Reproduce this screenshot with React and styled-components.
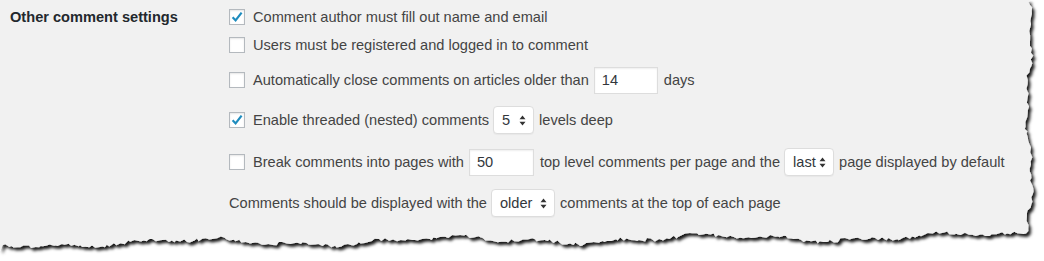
import React from "react"
import styled, { createGlobalStyle } from "styled-components"

const GlobalStyle = createGlobalStyle`
  html, body {
    margin: 0;
    padding: 0;
    background: #fff;
  }
  body {
    font-family: "Liberation Sans", Arial, sans-serif;
  }
`;

// deterministic jitter for the torn paper edge
function makeRand(seed) {
  let s = seed
  return () => {
    s = (s * 16807) % 2147483647
    return (s - 1) / 2147483646
  }
}

function tornPath() {
  const rand = makeRand(11)
  const pts = [[0, 0], [1030, 0]]
  for (let y = 2; y < 232; y += 2 + rand() * 3) {
    const x = 1029 + 2.5 * Math.sin(y / 23) + 1.6 * Math.sin(y / 7.3) + (rand() - 0.5) * 2.6
    pts.push([x, y])
  }
  for (let x = 1026; x > 0; x -= 1.5 + rand() * 3.5) {
    const y = 244 - (x / 1026) * 8 + 3 * Math.sin(x / 41) + 1.8 * Math.sin(x / 12.7) + (rand() - 0.5) * 3.6
    pts.push([x, y])
  }
  pts.push([0, 251])
  return "M" + pts.map(p => p[0].toFixed(1) + " " + p[1].toFixed(1)).join(" L") + " Z"
}

const PAPER = tornPath()

const Page = styled.div`
  position: relative;
  width: 1044px;
  height: 261px;
  overflow: hidden;
  background: #fff;
`;

const Paper = styled.svg`
  position: absolute;
  left: 0;
  top: 0;
  z-index: 0;
`;

const Table = styled.div`
  position: relative;
  z-index: 1;
  display: flex;
  padding-top: 3px;
  color: #444;
  font-size: 14.6px;
`;

const Heading = styled.div`
  width: 229px;
  padding-left: 10px;
  box-sizing: border-box;
  height: 28px;
  line-height: 28px;
  font-weight: 700;
  color: #23282d;
`;

const Fields = styled.div`
  display: flex;
  flex-direction: column;
`;

const Row = styled.div`
  display: flex;
  align-items: center;
  height: 28px;
  margin-top: ${p => p.$top || 0}px;
  white-space: pre;
`;

const Box = styled.span`
  width: 16px;
  height: 16px;
  box-sizing: border-box;
  border: 1px solid #b4b9be;
  background: #fff;
  box-shadow: inset 0 1px 2px rgba(0, 0, 0, 0.1);
  margin-right: 8px;
  display: flex;
  align-items: center;
  justify-content: center;
`;

const TextInput = styled.span`
  width: ${p => p.$w}px;
  height: 27px;
  box-sizing: border-box;
  border: 1px solid #ddd;
  background: #fff;
  box-shadow: inset 0 1px 2px rgba(0, 0, 0, 0.07);
  padding-left: 7px;
  margin: 0 6px 0 5px;
  display: flex;
  align-items: center;
  color: #32373c;
`;

const Select = styled.span`
  width: ${p => p.$w}px;
  height: 28px;
  box-sizing: border-box;
  border: 1px solid #ddd;
  border-radius: 4px;
  background: #fff;
  box-shadow: 0 1px 1px rgba(0, 0, 0, 0.04);
  padding: 0 7px 0 8px;
  margin: 0 5px 0 4px;
  display: flex;
  align-items: center;
  justify-content: space-between;
  color: #32373c;
`;

function Checkbox({ checked }) {
  return (
    <Box>
      {checked && (
        <svg width="14" height="14" viewBox="0 0 14 14">
          <path d="M2.6 7.2 L5.6 10.4 L11.6 2.6" fill="none" stroke="#1e8cbe" strokeWidth="2.2" strokeLinejoin="miter" />
        </svg>
      )}
    </Box>
  )
}

function Dropdown({ value, width }) {
  return (
    <Select $w={width}>
      <span>{value}</span>
      <svg width="7" height="11" viewBox="0 0 7 11">
        <path d="M3.5 0.5 L6.5 4.2 L0.5 4.2 Z M3.5 10.5 L6.5 6.8 L0.5 6.8 Z" fill="#333" />
      </svg>
    </Select>
  )
}

function App() {
  return (
    <Page>
      <GlobalStyle />
      <Paper width="1044" height="261" viewBox="0 0 1044 261">
        <defs>
          <filter id="tear" x="-5%" y="-5%" width="110%" height="120%">
            <feDropShadow dx="2.5" dy="3" stdDeviation="1.6" floodColor="#000" floodOpacity="0.9" />
          </filter>
        </defs>
        <path d={PAPER} fill="#f1f1f1" filter="url(#tear)" />
      </Paper>
      <Table>
        <Heading>Other comment settings</Heading>
        <Fields>
          <Row>
            <Checkbox checked />
            Comment author must fill out name and email
          </Row>
          <Row>
            <Checkbox />
            Users must be registered and logged in to comment
          </Row>
          <Row $top={7}>
            <Checkbox />
            Automatically close comments on articles older than
            <TextInput $w={64}>14</TextInput>
            days
          </Row>
          <Row $top={12}>
            <Checkbox checked />
            Enable threaded (nested) comments
            <Dropdown value="5" width={41} />
            levels deep
          </Row>
          <Row $top={14}>
            <Checkbox />
            Break comments into pages with
            <TextInput $w={65}>50</TextInput>
            top level comments per page and the
            <Dropdown value="last" width={50} />
            page displayed by default
          </Row>
          <Row $top={13}>
            Comments should be displayed with the
            <Dropdown value="older" width={64} />
            comments at the top of each page
          </Row>
        </Fields>
      </Table>
    </Page>
  )
}

export default App
